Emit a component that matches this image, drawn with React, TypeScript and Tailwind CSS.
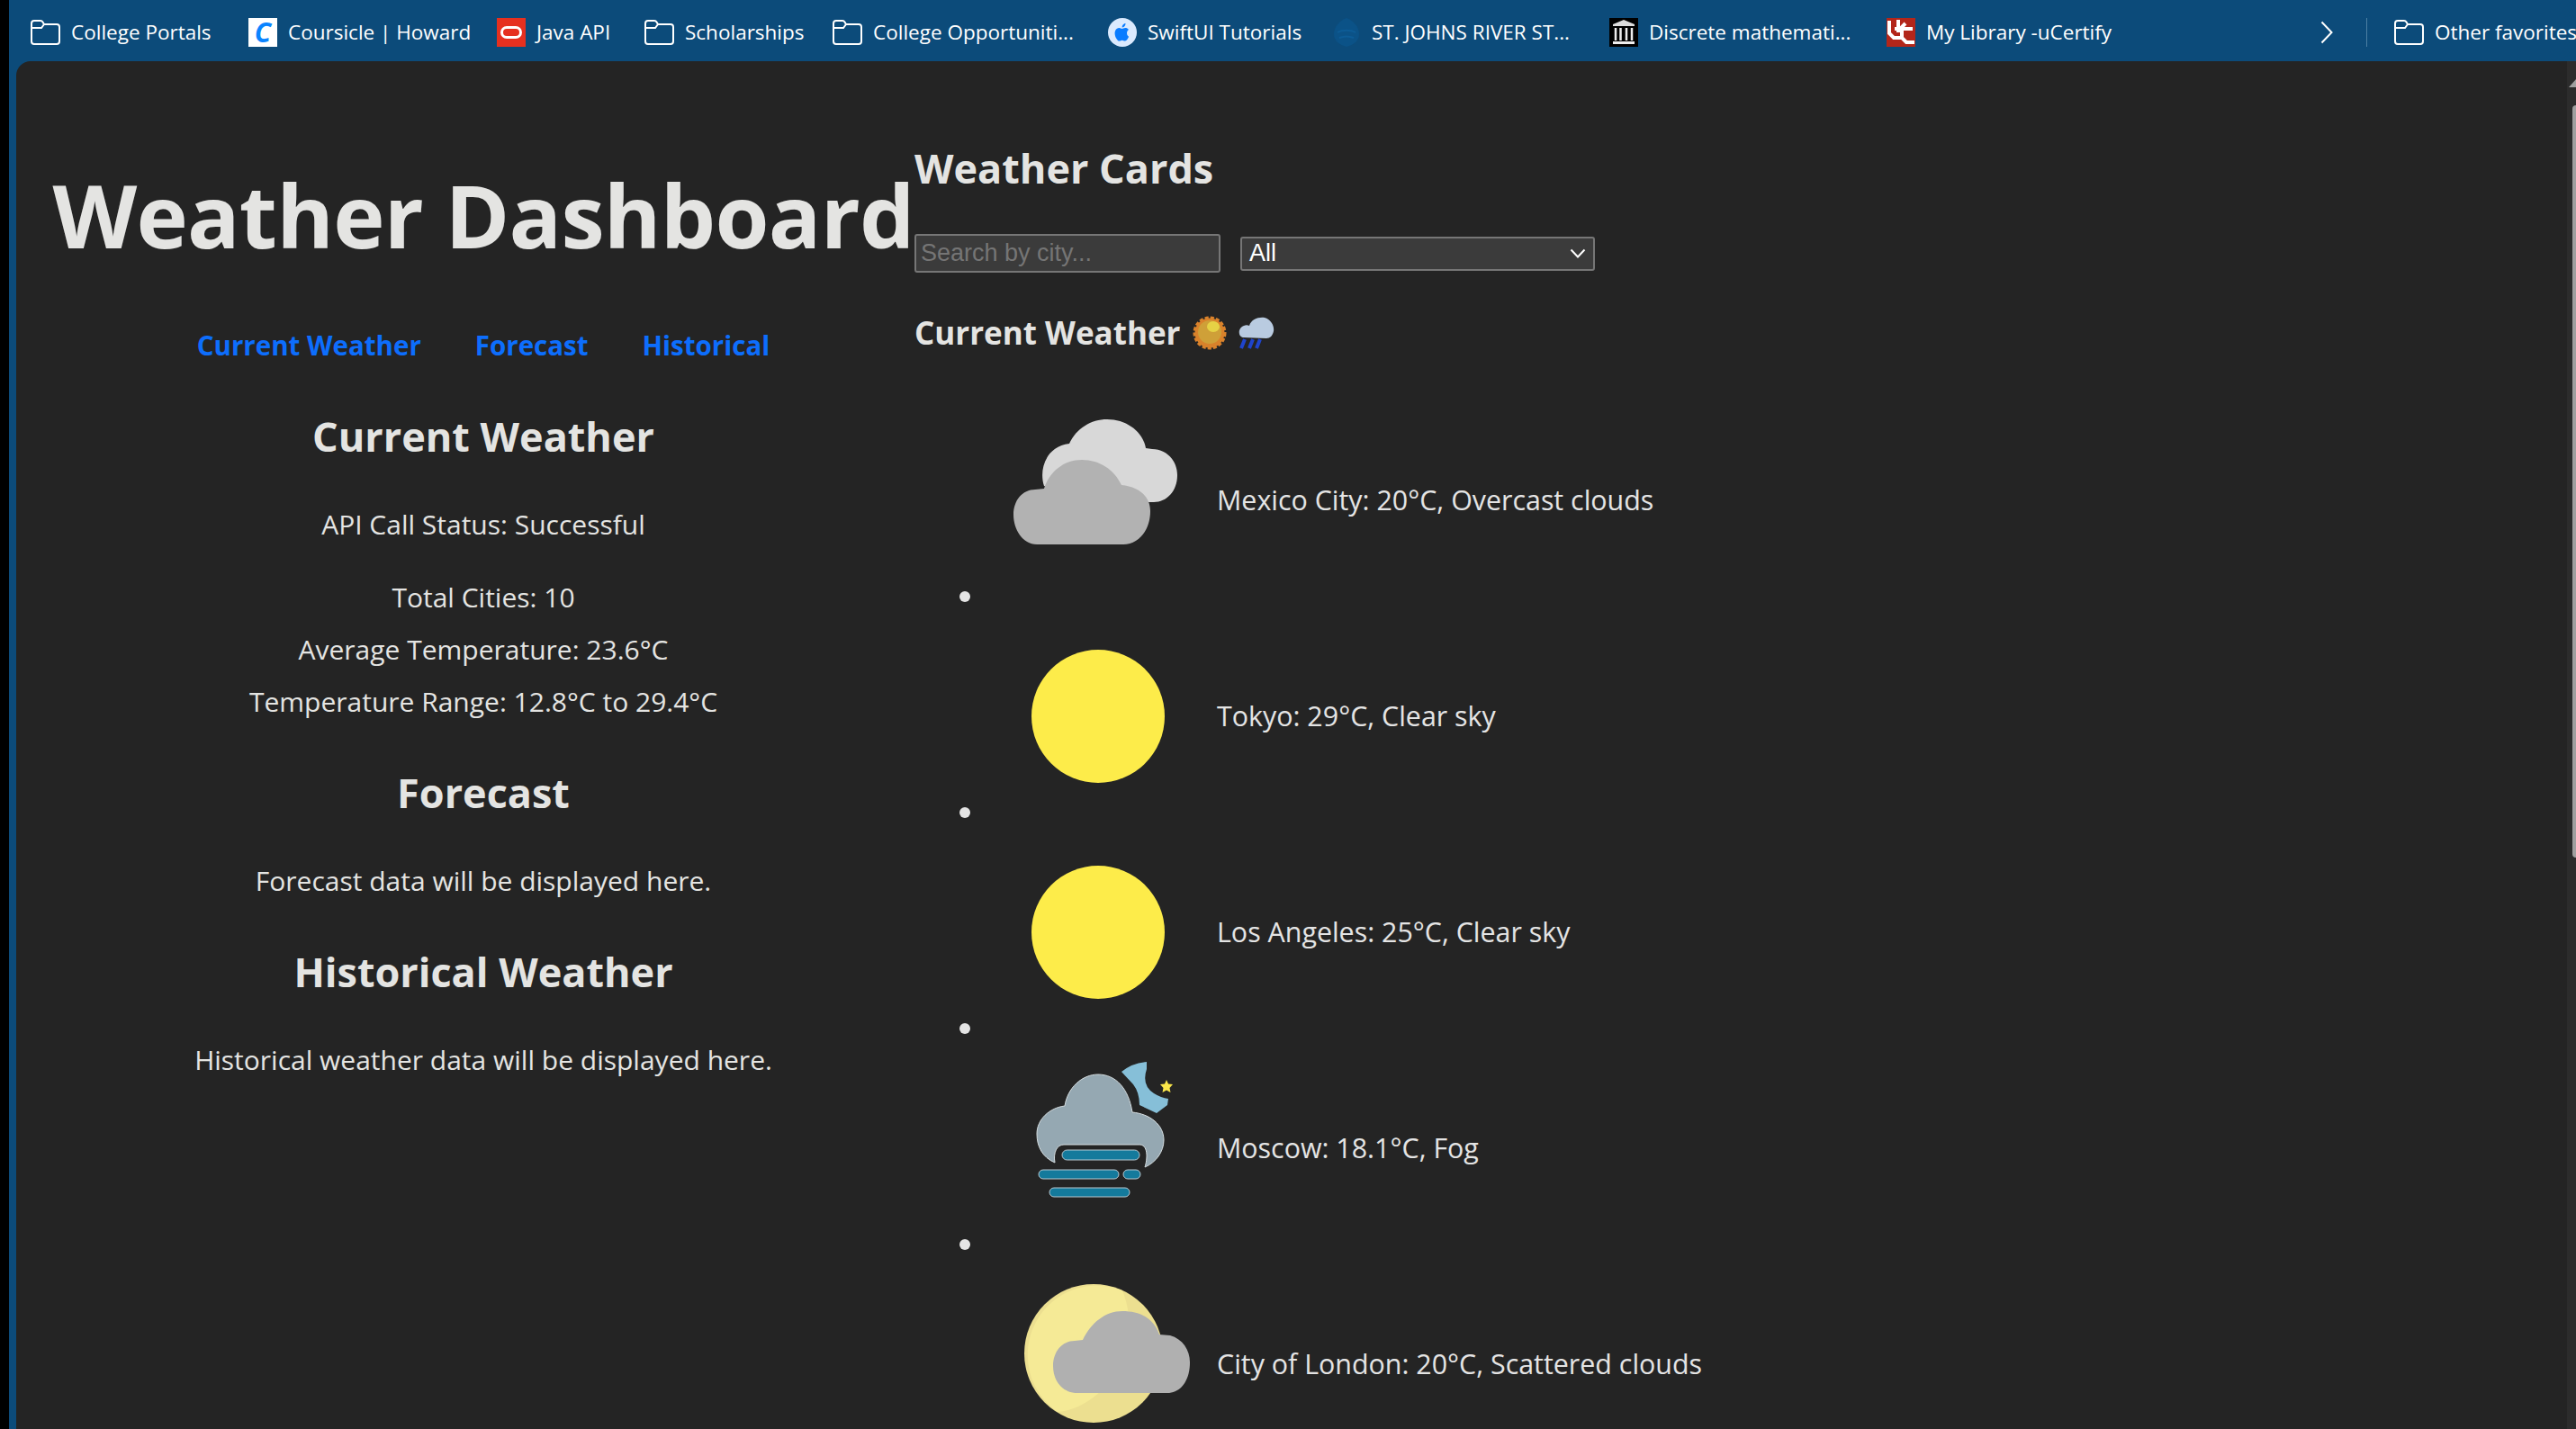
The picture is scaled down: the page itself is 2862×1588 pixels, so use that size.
import type { ReactNode } from 'react';

const FONT = "font-['Open_Sans','Noto_Sans','Liberation_Sans',sans-serif]";

function Folder() {
  return (
    <svg width="33" height="28" viewBox="0 0 33 28" fill="none" stroke="#fff" strokeWidth="2" className="shrink-0">
      <path d="M1 9V4a3 3 0 0 1 3-3h7a3 3 0 0 1 2.500 1.500L15 5h14a3 3 0 0 1 3 3v16a3 3 0 0 1-3 3H4a3 3 0 0 1-3-3V9h11l3-4" />
    </svg>
  );
}

function CoursicleIcon() {
  return (
    <span className="flex h-8 w-8 shrink-0 items-center justify-center bg-white text-[30px] font-bold italic leading-none text-[#0a84ff]">
      C
    </span>
  );
}

function OracleIcon() {
  return (
    <span className="flex h-8 w-8 shrink-0 items-center justify-center bg-[#e6301f]">
      <span className="h-3.5 w-6 rounded-full border-[3px] border-white" />
    </span>
  );
}

function AppleIcon() {
  return (
    <svg width="32" height="32" viewBox="0 0 32 32" className="shrink-0">
      <circle cx="16" cy="16" r="16" fill="#dbeafe" />
      <path d="M21 16.500c0-2.500 2-3.500 2-3.500-1.200-1.700-3-2-3.700-2-1.500-.1-3 .9-3.700.9-.8 0-2-.9-3.200-.9-1.700 0-3.200 1-4 2.400-1.700 3-.4 7.400 1.200 9.800.8 1.200 1.800 2.500 3 2.400 1.200 0 1.700-.8 3.100-.8 1.500 0 1.900.8 3.200.8s2.100-1.200 2.900-2.300c.9-1.300 1.300-2.600 1.300-2.700-.1 0-2.100-.9-2.100-3.600zM18.500 9c.7-.8 1.100-1.900 1-3-1 0-2.100.7-2.800 1.500-.6.7-1.100 1.800-1 2.900 1.100.1 2.200-.6 2.800-1.400z" fill="#0a7cff" />
    </svg>
  );
}

function ShieldIcon() {
  return (
    <svg width="32" height="32" viewBox="0 0 32 32" className="shrink-0">
      <path d="M16 0C8 3 2 10 2 18c0 7 6 12 14 14 8-2 14-7 14-14C30 10 24 3 16 0z" fill="#0b5287" />
      <path d="M6 16c5-3 15-3 20 0M8 22c5-2 11-2 16 0" stroke="#0d5c96" strokeWidth="2" fill="none" />
    </svg>
  );
}

function LibraryIcon() {
  return (
    <svg width="32" height="32" viewBox="0 0 32 32" className="shrink-0">
      <rect width="32" height="32" fill="#000" />
      <path d="M4 7L16 2l12 5v2H4z" fill="#ddd" />
      <path d="M7 11v14M12.500 11v14M19 11v14M25 11v14" stroke="#eee" strokeWidth="2.500" />
      <rect x="4" y="26" width="24" height="3" fill="#eee" />
    </svg>
  );
}

function UCertifyIcon() {
  return (
    <svg width="32" height="32" viewBox="0 0 32 32" className="shrink-0">
      <rect width="32" height="32" fill="#b3261a" />
      <path d="M3 3v14l5 5h8M13 2v14M9 12h20M21 6l-4 4v12l5 5h9" stroke="#fff" strokeWidth="4" fill="none" />
    </svg>
  );
}

function Bookmark({ icon, label, className }: { icon: ReactNode; label: string; className: string }) {
  return (
    <div className={`flex shrink-0 items-center gap-[12px] whitespace-nowrap ${className}`}>
      {icon}
      <span>{label}</span>
    </div>
  );
}

function OvercastIcon() {
  return (
    <svg width="200" height="200" viewBox="0 0 200 200">
      <path d="M40 84C34 66 42 40 68 37C76 20 92 10 110 10C132 10 150 24 153 42L160 43C176 43 188 56 188 72C188 90 176 102 162 102L150 102Z" fill="#d8d8d8" />
      <path d="M32 149C16 149 6 132 6 116C6 100 16 88 30 88L40 87C46 68 62 55 82 55C102 55 118 66 126 83C146 85 158 96 158 112C158 132 146 149 128 149Z" fill="#b2b2b2" />
    </svg>
  );
}

function SunIcon() {
  return (
    <svg width="200" height="200" viewBox="0 0 200 200">
      <circle cx="100" cy="100" r="74" fill="#fdec4a" />
    </svg>
  );
}

function FogIcon() {
  return (
    <svg width="200" height="200" viewBox="0 0 200 200">
      <path d="M126 15Q138 5 154 4L154 12Q148 30 162 39Q170 44 178 45L177 52L165 61L146 52Q146 38 139 29Z" fill="#86bfd8" />
      <path d="M176 24L178 28.500L183 29L179.500 33L180.500 38L176 35.500L171.500 38L172.500 33L169 29L174 28.500Z" fill="#fbe74a" />
      <path d="M52 116C38 110 32 98 32 84C32 68 46 55 63 53C66 33 82 18 100 18C120 18 134 34 138 60C158 62 173 74 173 91C173 104 164 116 152 121C155 112 156 95 145 96L62 96C54 96 50 105 52 116Z" fill="#95a8b2" stroke="#d5dde0" strokeWidth="1" />
      <rect x="60" y="102" width="86" height="11" rx="5.500" fill="#147a9c" stroke="#b8c8d0" />
      <rect x="34" y="124" width="89" height="10" rx="5" fill="#147a9c" stroke="#b8c8d0" />
      <rect x="128" y="124" width="19" height="10" rx="5" fill="#147a9c" stroke="#b8c8d0" />
      <rect x="46" y="144" width="89" height="10" rx="5" fill="#147a9c" stroke="#b8c8d0" />
    </svg>
  );
}

function ScatteredIcon() {
  return (
    <svg width="200" height="200" viewBox="0 0 200 200" className="overflow-visible">
      <circle cx="95" cy="88" r="77" fill="#ecdf90" />
      <path d="M127 18A77 77 0 0 0 55 153C100 150 155 90 127 18Z" fill="#f5ea96" />
      <path d="M77 132C60 132 50 118 50 102C50 86 60 74 74 74L83 73C92 54 108 41 127 41C148 41 162 50 168 67L180 68C194 72 202 84 202 98C202 118 192 132 177 132Z" fill="#b0b0b0" />
    </svg>
  );
}

const CITIES = [
  { text: 'Mexico City: 20°C, Overcast clouds', icon: <OvercastIcon /> },
  { text: 'Tokyo: 29°C, Clear sky', icon: <SunIcon /> },
  { text: 'Los Angeles: 25°C, Clear sky', icon: <SunIcon /> },
  { text: 'Moscow: 18.1°C, Fog', icon: <FogIcon /> },
  { text: 'City of London: 20°C, Scattered clouds', icon: <ScatteredIcon /> },
];

function CityRow({ text, icon }: { text: string; icon: ReactNode }) {
  return (
    <li className="relative h-[240px] shrink-0 text-[30.4px] text-[#e4e4e4]">
      <div className="flex h-[200px] items-center gap-[32px]">
        <div className="w-[200px] shrink-0">{icon}</div>
        <span className="whitespace-nowrap">{text}</span>
      </div>
      <span className="absolute left-[-54px] top-[201px] h-3 w-3 rounded-full bg-[#e4e4e4]" />
    </li>
  );
}

export default function App() {
  return (
    <div className={`flex h-screen w-full flex-col overflow-hidden bg-black ${FONT}`}>
      <div className="ml-[10px] flex h-[68px] shrink-0 items-center justify-between bg-[#0c4b7a] pl-[24px] pt-[4px] text-[22.5px] text-white">
        <div className="flex items-center whitespace-nowrap">
          <Bookmark className="w-[242px]" icon={<Folder />} label="College Portals" />
          <Bookmark className="w-[276px]" icon={<CoursicleIcon />} label="Coursicle | Howard" />
          <Bookmark className="w-[164px]" icon={<OracleIcon />} label="Java API" />
          <Bookmark className="w-[209px]" icon={<Folder />} label="Scholarships" />
          <Bookmark className="w-[306px]" icon={<Folder />} label="College Opportuniti..." />
          <Bookmark className="w-[249px]" icon={<AppleIcon />} label="SwiftUI Tutorials" />
          <Bookmark className="w-[308px]" icon={<ShieldIcon />} label="ST. JOHNS RIVER ST..." />
          <Bookmark className="w-[308px]" icon={<LibraryIcon />} label="Discrete mathemati..." />
          <Bookmark className="w-[260px]" icon={<UCertifyIcon />} label="My Library -uCertify" />
        </div>
        <div className="flex items-center">
          <svg width="14" height="26" viewBox="0 0 14 26" fill="none" stroke="#fff" strokeWidth="2" className="mr-[37px]">
            <path d="M1.500 1.500L12.500 13L1.500 24.500" />
          </svg>
          <span className="mr-[30px] h-8 w-px bg-[#4b7ea3]" />
          <div className="flex w-[202px] items-center gap-[12px] overflow-hidden whitespace-nowrap">
            <Folder />
            <span>Other favorites</span>
          </div>
        </div>
      </div>

      <div className="ml-[10px] flex min-h-0 flex-1 bg-[#0c4b7a] pl-[8px]">
        <main className="flex min-h-0 flex-1 overflow-hidden rounded-tl-[16px] bg-[#242424]">
          <section className="w-[998px] shrink-0 pl-[40px] pt-[114px] text-center text-[#e4e4e2]">
            <h1 className="whitespace-nowrap text-[97px] font-bold leading-[112px] tracking-[-0.75px]">Weather Dashboard</h1>
            <nav className="mt-[68px] flex justify-center gap-[60px] text-[29.5px] font-bold leading-[44px] text-[#0d6efd]">
              <span>Current Weather</span>
              <span>Forecast</span>
              <span>Historical</span>
            </nav>
            <h2 className="mt-[49px] text-[45px] font-bold leading-[60px]">Current Weather</h2>
            <p className="mt-[46px] text-[30px] leading-[44px]">API Call Status: Successful</p>
            <div className="mt-[30px] text-[30px] leading-[58px]">
              <p>Total Cities: 10</p>
              <p>Average Temperature: 23.6°C</p>
              <p>Temperature Range: 12.8°C to 29.4°C</p>
            </div>
            <h2 className="mt-[42px] text-[45px] font-bold leading-[60px]">Forecast</h2>
            <p className="mt-[46px] text-[30px] leading-[44px]">Forecast data will be displayed here.</p>
            <h2 className="mt-[49px] text-[45px] font-bold leading-[60px]">Historical Weather</h2>
            <p className="mt-[46px] text-[30px] leading-[44px]">Historical weather data will be displayed here.</p>
          </section>

          <section className="min-w-0 flex-1 pt-[92px] text-[#e4e4e2]">
            <h2 className="text-[45px] font-bold leading-[54px]">Weather Cards</h2>
            <div className="mt-[46px] flex items-center gap-[22px]">
              <input
                placeholder="Search by city..."
                className="h-[43px] w-[340px] rounded-[3px] border-2 border-[#767676] bg-[#3b3b3b] px-[5px] font-['Liberation_Sans',sans-serif] text-[27px] placeholder:text-[#757575]"
              />
              <div className="flex h-[38px] w-[394px] items-center justify-between rounded-[3px] border-2 border-[#767676] bg-[#3b3b3b] px-[8px] font-['Liberation_Sans',sans-serif] text-[27px] text-white">
                <span>All</span>
                <svg width="18" height="11" viewBox="0 0 18 11" fill="none" stroke="#fff" strokeWidth="2">
                  <path d="M1.500 1.500L9 9.500L16.500 1.500" />
                </svg>
              </div>
            </div>
            <div className="mt-[44px] flex h-[46px] items-center">
              <h3 className="text-[35px] font-bold leading-[46px]">Current Weather</h3>
              <svg width="38" height="38" viewBox="0 0 38 38" className="ml-[14px]">
                <circle cx="19" cy="19" r="16.500" fill="#d9822b" stroke="#d9822b" strokeWidth="4" strokeDasharray="4 2" />
                <circle cx="19" cy="18" r="13" fill="#cfa038" />
                <ellipse cx="23" cy="12" rx="7" ry="6" fill="#e6d245" />
              </svg>
              <svg width="40" height="36" viewBox="0 0 40 36" className="ml-[13px]">
                <path d="M6 23C-1 23-1 12 6 10C8 9 10 9 12 10C14 3 22 0 29 1C36 3 40 10 39 16C38 21 35 24 31 24Z" fill="#b9cbe0" />
                <path d="M7 25L3 35M16 25L12 35M24 25L20 35" stroke="#1f44cc" strokeWidth="4" />
              </svg>
            </div>
            <ul className="mt-[63px] flex flex-col pl-[104px]">
              {CITIES.map((c) => (
                <CityRow key={c.text} text={c.text} icon={c.icon} />
              ))}
            </ul>
          </section>

          <div className="flex w-[10px] shrink-0 flex-col items-end self-stretch bg-[#2c2c2c] pt-[20px]">
            <svg width="8" height="9" viewBox="0 0 8 9">
              <path d="M8 0V9H0Z" fill="#9f9f9f" />
            </svg>
            <div className="mt-[20px] h-[836px] w-[4px] rounded-l-full bg-[#9f9f9f]" />
          </div>
        </main>
      </div>
    </div>
  );
}
